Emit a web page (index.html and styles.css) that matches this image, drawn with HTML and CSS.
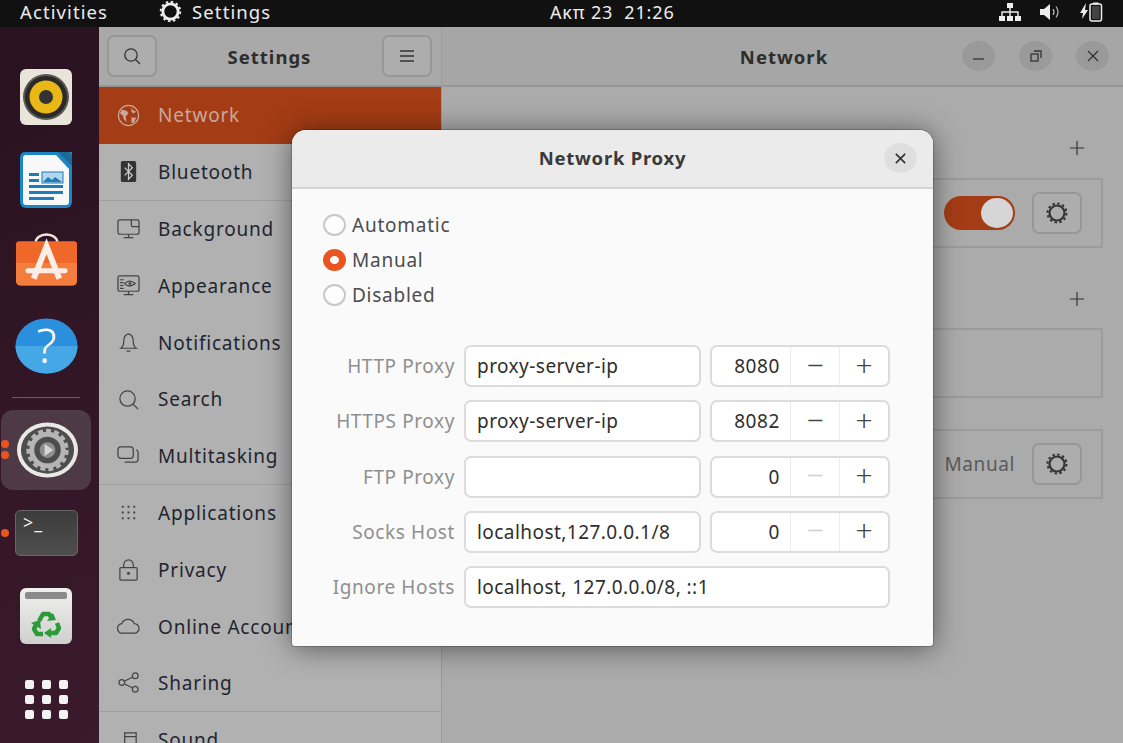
FILE: index.html
```html
<!DOCTYPE html>
<html lang="en">
<head>
<meta charset="utf-8">
<title>Network Proxy</title>
<link rel="stylesheet" href="styles.css">
</head>
<body>
<header class="topbar">
  <div class="top-left">
    <span class="activities">Activities</span>
    <span class="appmenu">
      <svg class="ic-appgear" viewBox="0 0 24 24"><circle cx="12" cy="12" r="8" fill="none" stroke="#eee" stroke-width="3"/><circle cx="12" cy="12" r="10.2" fill="none" stroke="#eee" stroke-width="2" stroke-dasharray="2.6 2.74"/></svg>
      Settings
    </span>
  </div>
  <div class="clock">Ακπ 23&nbsp;&nbsp;21:26</div>
  <div class="tray">
    <svg class="ic-net" viewBox="0 0 22 18"><path d="M8 0h6v5H8zM0 13h6v5H0zM8 13h6v5H8zM16 13h6v5h-6z" fill="#eee"/><path d="M11 5v4M3 13V9h16v4M11 9v4" stroke="#eee" stroke-width="1.4" fill="none"/></svg>
    <svg class="ic-vol" viewBox="0 0 22 18"><path d="M1 6h4l6-5v16l-6-5H1z" fill="#eee"/><path d="M14 6q2 3 0 6M17 3.500q4 5.500 0 11" stroke="#bbb" stroke-width="1.200" fill="none"/></svg>
    <svg class="ic-bat" viewBox="0 0 24 20"><path d="M7 1 1 11h3l-1 6 6-9H6z" fill="#eee"/><rect x="11" y="2" width="11.500" height="17" rx="2" fill="none" stroke="#eee" stroke-width="1.500"/><rect x="14" y="0.500" width="5.500" height="2" fill="#eee"/><rect x="13" y="4" width="7.500" height="13" fill="#ddd" opacity=".25"/></svg>
  </div>
</header>

<div class="desktop">
  <nav class="dock">
    <div class="dock-item rhythm">
      <svg viewBox="0 0 52 56"><rect width="52" height="56" rx="6" fill="#e9e5da"/><circle cx="26" cy="28" r="23" fill="#5a5855"/><circle cx="26" cy="28" r="21" fill="#2b2a28"/><circle cx="26" cy="28" r="16.500" fill="#e9b716"/><circle cx="26" cy="28" r="7" fill="#333"/></svg>
    </div>
    <div class="dock-item writer">
      <svg viewBox="0 0 52 56"><path d="M5 0h47v50a6 6 0 0 1-6 6H6a6 6 0 0 1-6-6V5a5 5 0 0 1 5-5z" fill="#1b87c6"/><path d="M38 0h9a5 5 0 0 1 5 5v9z" fill="#1a6a97"/><path d="M6 3h30l13 14v33a3 3 0 0 1-3 3H6a3 3 0 0 1-3-3V6a3 3 0 0 1 3-3z" fill="#f6f8fa"/><path d="M9 21h10v3H9zM9 27h10v3H9zM9 33h34v3H9zM9 39h34v3H9zM9 45h25v3H9z" fill="#1b7dbb"/><rect x="22" y="20" width="21" height="11" fill="#b5d5ea" stroke="#1b7dbb"/><path d="M23 30l5-5 4 3 3-3 7 5z" fill="#1b7dbb"/></svg>
    </div>
    <div class="dock-wide store">
      <svg viewBox="0 0 64 53"><path d="M21 9a11 8 0 0 1 22 0" fill="none" stroke="#f3e6da" stroke-width="2.500"/><path d="M4 8h56a3 3 0 0 1 3 3v37a5 5 0 0 1-5 5H6a5 5 0 0 1-5-5V11a3 3 0 0 1 3-3z" fill="#f0672a"/><path d="M1 30h62v18a5 5 0 0 1-5 5H6a5 5 0 0 1-5-5z" fill="#f47c3d"/><path d="M19 46 32 13l13 33" fill="none" stroke="#fbeee6" stroke-width="6"/><path d="M13 38h38" stroke="#fbeee6" stroke-width="5" stroke-linecap="round"/></svg>
    </div>
    <div class="dock-wide help">
      <svg viewBox="0 0 64 56"><ellipse cx="32" cy="28" rx="31.500" ry="28" fill="#2a8fdc"/><path d="M.500 28h63a31.500 28 0 0 1-63 0z" fill="#45a7e6"/><text x="32" y="45" text-anchor="middle" class="help-mark">?</text></svg>
    </div>
    <div class="dock-sep"></div>
    <div class="dock-active">
      <span class="dot dot-a"></span><span class="dot dot-b"></span>
      <svg viewBox="0 0 64 56"><ellipse cx="32" cy="28" rx="31" ry="28" fill="#e9e9e6"/><ellipse cx="32" cy="28" rx="27" ry="24" fill="#4d4d4d"/><circle cx="32" cy="28" r="16" fill="none" stroke="#b5b5b5" stroke-width="5"/><circle cx="32" cy="28" r="19.500" fill="none" stroke="#b5b5b5" stroke-width="4" stroke-dasharray="5 3.170"/><circle cx="32" cy="28" r="8" fill="#8e8e8e"/><path d="M29 22l9 6-9 6z" fill="#d6d6d6"/></svg>
    </div>
    <div class="dock-wide term-wrap">
      <span class="dot dot-c"></span>
      <div class="term"><span class="term-prompt">&gt;_</span></div>
    </div>
    <div class="dock-item trash">
      <svg viewBox="0 0 52 56"><defs><linearGradient id="tg" x1="0" y1="0" x2="0" y2="1"><stop offset="0" stop-color="#f1f1ef"/><stop offset="1" stop-color="#cfcfcd"/></linearGradient></defs><rect width="52" height="56" rx="6" fill="url(#tg)"/><rect x="5" y="4" width="42" height="7" rx="2" fill="#8b8b8b"/><g class="recycle"><path d="M19 33l4-7h6l2 3M37 35l2 5-3 5h-6M23 46h-6l-3-5 2-4"/><path class="recycle-tip" d="M27 33l9-1-3-7zM31 40v10l-7-5zM11 35l9-3 1 9z"/></g></svg>
    </div>
    <div class="app-grid">
      <i></i><i></i><i></i><i></i><i></i><i></i><i></i><i></i><i></i>
    </div>
  </nav>

  <main class="window">
    <aside class="sidebar">
      <div class="side-head">
        <button class="hbtn"><svg class="ic" viewBox="0 0 20 20"><circle cx="9" cy="9" r="6.200"/><path d="M13.500 13.500 18 18"/></svg></button>
        <span class="head-title">Settings</span>
        <button class="hbtn"><svg class="ic" viewBox="0 0 20 20"><path d="M3 5h14M3 10h14M3 15h14"/></svg></button>
      </div>
      <ul class="side-list">
        <li class="row selected"><svg class="ic" viewBox="0 0 24 24"><circle cx="12" cy="12" r="10.500"/><path d="M5 6l5 1 2 3-3 3 1 6-3-3-1-4-3-2zM15 3l1 3 4 2-3 2-2-2zM15 14h5l-2 5-3 1z" class="fill"/></svg>Network</li>
        <li class="row sep"><svg class="ic" viewBox="0 0 24 24"><rect x="4" y="1" width="16" height="22" rx="2" class="fill-dark"/><path d="M8 8l8 8-4 4V4l4 4-8 8" stroke="#ccc"/></svg>Bluetooth</li>
        <li class="row"><svg class="ic" viewBox="0 0 24 24"><rect x="1" y="3" width="22" height="15" rx="2"/><path d="M12 18v3M7 21.500h10M15 3v5q0 2 2 2h6" /></svg>Background</li>
        <li class="row"><svg class="ic" viewBox="0 0 24 24"><rect x="1" y="2" width="22" height="16" rx="2"/><path d="M12 18v3M7 21.500h10M3 6h4M3 9h4M3 12h4M3 15h4M8 10q5-5 11 0q-6 5-11 0z"/><circle cx="13.500" cy="10" r="1.500" class="fill"/></svg>Appearance</li>
        <li class="row"><svg class="ic" viewBox="0 0 24 24"><path d="M4 18q3-2 3-7 0-7 5-8 5 1 5 8 0 5 3 7zM10 21h4"/></svg>Notifications</li>
        <li class="row"><svg class="ic" viewBox="0 0 24 24"><circle cx="11" cy="11" r="8"/><path d="M17 17l5 5"/></svg>Search</li>
        <li class="row sep"><svg class="ic" viewBox="0 0 24 24"><rect x="1" y="3" width="16" height="12" rx="3"/><path d="M8 19h11a3 3 0 0 0 3-3V9a3 3 0 0 0-2-3"/></svg>Multitasking</li>
        <li class="row"><svg class="ic" viewBox="0 0 24 24"><path d="M5 5h2v2H5zM11 5h2v2h-2zM17 5h2v2h-2zM5 11h2v2H5zM11 11h2v2h-2zM17 11h2v2h-2zM5 17h2v2H5zM11 17h2v2h-2zM17 17h2v2h-2z" class="fill"/></svg>Applications</li>
        <li class="row"><svg class="ic" viewBox="0 0 24 24"><rect x="3" y="10" width="18" height="13" rx="1"/><path d="M7 10V7a5 5 0 0 1 10 0v3"/><circle cx="12" cy="16" r="1.600" class="fill"/></svg>Privacy</li>
        <li class="row"><svg class="ic" viewBox="0 0 24 24"><path d="M6 19a5 5 0 0 1-1-10 7 7 0 0 1 13 0 5 5 0 0 1 0 10z"/></svg>Online Accounts</li>
        <li class="row sep"><svg class="ic" viewBox="0 0 24 24"><circle cx="5" cy="12" r="3"/><circle cx="19" cy="5" r="3"/><circle cx="19" cy="19" r="3"/><path d="M8 10.500 16 6.500M8 13.500l8 4"/></svg>Sharing</li>
        <li class="row"><svg class="ic" viewBox="0 0 24 24"><path d="M8 20V4h12v16M8 8h12"/></svg>Sound</li>
      </ul>
    </aside>
    <section class="content">
      <div class="content-head">
        <span class="head-title">Network</span>
        <div class="winbtns">
          <span class="winbtn"><svg class="ic" viewBox="0 0 16 16"><path d="M2 11h11"/></svg></span>
          <span class="winbtn"><svg class="ic" viewBox="0 0 16 16"><rect x="3" y="6" width="7" height="7"/><path d="M6 3h7v7"/></svg></span>
          <span class="winbtn"><svg class="ic" viewBox="0 0 16 16"><path d="M3 3l10 10M13 3 3 13"/></svg></span>
        </div>
      </div>
      <div class="content-body">
        <div class="sec-add"><svg class="ic" viewBox="0 0 18 18"><path d="M9 1v16M1 9h16"/></svg></div>
        <div class="card">
          <span class="switch"><span class="knob"></span></span>
          <button class="gear-btn"><svg class="ic" viewBox="0 0 24 24"><circle cx="12" cy="12" r="7.500" stroke-width="2.200"/><circle cx="12" cy="12" r="9.500" stroke-width="2" stroke-dasharray="2.500 2.470"/></svg></button>
        </div>
        <div class="sec-add add2"><svg class="ic" viewBox="0 0 18 18"><path d="M9 1v16M1 9h16"/></svg></div>
        <div class="card empty"></div>
        <div class="card card3">
          <span class="card-val">Manual</span>
          <button class="gear-btn"><svg class="ic" viewBox="0 0 24 24"><circle cx="12" cy="12" r="7.500" stroke-width="2.200"/><circle cx="12" cy="12" r="9.500" stroke-width="2" stroke-dasharray="2.500 2.470"/></svg></button>
        </div>
      </div>
    </section>
  </main>

  <div class="dialog">
    <div class="dlg-head">
      <span class="dlg-title">Network Proxy</span>
      <span class="dlg-close"><svg class="ic" viewBox="0 0 16 16"><path d="M3 3l10 10M13 3 3 13"/></svg></span>
    </div>
    <div class="dlg-body">
      <div class="radios">
        <label class="radio"><span class="rdot"></span>Automatic</label>
        <label class="radio"><span class="rdot on"></span>Manual</label>
        <label class="radio"><span class="rdot"></span>Disabled</label>
      </div>
      <div class="form">
        <span class="flabel">HTTP Proxy</span>
        <span class="entry">proxy-server-ip</span>
        <span class="spin"><span class="spin-val">8080</span><span class="spin-btn">−</span><span class="spin-btn">+</span></span>
        <span class="flabel">HTTPS Proxy</span>
        <span class="entry">proxy-server-ip</span>
        <span class="spin"><span class="spin-val">8082</span><span class="spin-btn">−</span><span class="spin-btn">+</span></span>
        <span class="flabel">FTP Proxy</span>
        <span class="entry"></span>
        <span class="spin"><span class="spin-val">0</span><span class="spin-btn off">−</span><span class="spin-btn">+</span></span>
        <span class="flabel">Socks Host</span>
        <span class="entry">localhost,127.0.0.1/8</span>
        <span class="spin"><span class="spin-val">0</span><span class="spin-btn off">−</span><span class="spin-btn">+</span></span>
        <span class="flabel">Ignore Hosts</span>
        <span class="entry wide">localhost, 127.0.0.0/8, ::1</span>
      </div>
    </div>
  </div>
</div>
</body>
</html>
```
FILE: styles.css
```css
* { box-sizing: border-box; }
html, body { margin: 0; height: 100%; overflow: hidden; }
body { width: 1123px; height: 743px; font-family: "Noto Sans", "Open Sans", sans-serif; font-size: 19px; background: #2b1421; display: flex; flex-direction: column; }

.topbar { height: 27px; flex: none; background: #111; color: #ececec; display: grid; grid-template-columns: 530px auto 1fr; align-items: center; font-size: 18.500px; letter-spacing: 1.100px; padding: 0 0 5px 20px; line-height: 22px; }
.top-left { display: flex; align-items: center; gap: 51px; }
.appmenu { display: flex; align-items: center; gap: 10px; }
.ic-appgear { width: 23px; height: 23px; }
.clock { font-size: 18px; letter-spacing: .85px; }
.tray { display: flex; justify-content: flex-end; align-items: center; gap: 18px; padding-right: 20px; }
.ic-net { width: 22px; height: 18px; }
.ic-vol { width: 22px; height: 18px; }
.ic-bat { width: 24px; height: 20px; }

.desktop { flex: 1; display: flex; position: relative; min-height: 0; }

.dock { width: 99px; flex: none; background: linear-gradient(160deg, #2a1220, #3a1a2c); display: flex; flex-direction: column; align-items: flex-start; padding-top: 42px; }
.dock svg { display: block; width: 100%; height: 100%; }
.dock-item { width: 52px; height: 56px; flex: none; margin-left: 20px; }
.dock-wide { width: 63px; flex: none; margin-left: 15px; position: relative; }
.writer { margin-top: 27px; }
.store { height: 53px; margin-top: 25px; }
.help { height: 56px; margin-top: 32px; }
.dock-sep { width: 68px; height: 1px; background: #6c5a66; margin: 23px 0 0 12px; flex: none; }
.dock-active { width: 90px; height: 80px; margin: 12px 0 0 1px; border-radius: 12px; background: #4e3a47; display: flex; align-items: center; justify-content: center; position: relative; flex: none; }
.dock .dock-active svg { width: 63px; height: 56px; margin-left: 2px; }
.dot { position: absolute; width: 8px; height: 8px; border-radius: 50%; background: #e95420; }
.dot-a { left: 0; top: 30px; }
.dot-b { left: 0; top: 41px; }
.dot-c { left: -14px; top: 19px; }
.term-wrap { height: 46px; margin-top: 20px; }
.term { width: 63px; height: 46px; border-radius: 5px; background: linear-gradient(#3c3c3c, #4e4e4e); border: 1px solid #666; color: #eee; padding: 0 0 0 7px; }
.term-prompt { font-size: 18px; letter-spacing: 1px; line-height: 22px; display: block; }
.trash { margin-top: 32px; }
.recycle path { fill: none; stroke: #2c9a36; stroke-width: 4.500; stroke-linejoin: round; }
.recycle .recycle-tip { fill: #2c9a36; stroke: none; }
.app-grid { display: grid; grid-template-columns: repeat(3, 9px); gap: 6px 8px; margin: 36px 0 0 25px; }
.app-grid i { width: 9px; height: 9px; background: #f2f2f2; border-radius: 2px; }

.window { flex: 1; display: flex; min-width: 0; }
.ic { fill: none; stroke: currentColor; stroke-width: 1.300; display: block; }
.ic .fill { fill: currentColor; stroke: none; }
.ic .fill-dark { fill: #333; stroke: none; }

.sidebar { width: 343px; flex: none; background: #b1b1b1; border-right: 1px solid #9a9a9a; color: #1f2530; display: flex; flex-direction: column; overflow: hidden; }
.side-head { height: 60px; flex: none; padding: 9px 9px 9px 8px; background: #a9a9a9; border-bottom: 2px solid #959595; display: flex; align-items: center; justify-content: space-between; }
.hbtn { width: 50px; height: 42px; border: 2px solid #979797; border-radius: 7px; background: #adadad; color: #333; display: flex; align-items: center; justify-content: center; padding: 0; }
.hbtn .ic { width: 20px; height: 20px; }
.head-title { font-weight: 700; font-size: 18.500px; letter-spacing: 1px; color: #2d2d2d; }

.side-list { list-style: none; margin: 0; padding: 0; }
.row { height: 56.800px; display: flex; align-items: center; gap: 18px; padding-left: 18px; white-space: nowrap; font-size: 19px; letter-spacing: .8px; }
.row .ic { width: 23px; height: 23px; flex: none; color: #444; }
.row.sep { border-bottom: 1px solid #a0a0a0; }
.row.selected { background: #a43c15; color: #c9a79a; }
.row.selected .ic { color: #c9a79a; }

.content { flex: 1; background: #ababab; min-width: 0; display: flex; flex-direction: column; }
.content-head { height: 60px; flex: none; background: #a6a6a6; border-bottom: 2px solid #959595; display: flex; align-items: center; justify-content: center; position: relative; padding-left: 3px; }
.winbtns { position: absolute; right: 14px; top: 14px; display: flex; gap: 24px; }
.winbtn { width: 33px; height: 30px; border-radius: 50%; background: #9a9a9a; color: #333; display: flex; align-items: center; justify-content: center; }
.winbtn .ic { width: 16px; height: 16px; }

.content-body { flex: 1; padding: 0 20px 0 0; display: flex; flex-direction: column; align-items: flex-end; }
.sec-add { height: 91px; padding: 53px 18px 0 0; color: #333; }
.sec-add .ic { width: 16px; height: 16px; }
.add2 { height: 80px; padding-top: 43px; }
.card { width: 400px; height: 70px; border: 2px solid #9c9c9c; display: flex; align-items: center; justify-content: flex-end; gap: 17px; padding-right: 19px; flex: none; }
.empty { margin-bottom: 31px; }
.switch { width: 71px; height: 34px; border-radius: 17px; background: #a43c15; padding: 2px; display: flex; justify-content: flex-end; }
.knob { width: 32px; height: 30px; border-radius: 50%; background: #d6d6d6; }
.gear-btn { width: 50px; height: 42px; border: 2px solid #979797; border-radius: 7px; background: #adadad; color: #333; padding: 0; display: flex; align-items: center; justify-content: center; }
.gear-btn .ic { width: 24px; height: 24px; }
.card-val { color: #5a5a5a; font-size: 19px; letter-spacing: .6px; }

.dialog { position: absolute; left: 292px; top: 103px; width: 641px; height: 516px; background: #fafafa; border-radius: 14px 14px 3px 3px; box-shadow: 0 2px 28px rgba(0, 0, 0, .5), 0 0 0 1px rgba(0, 0, 0, .18); overflow: hidden; display: flex; flex-direction: column; }
.dlg-head { height: 59px; flex: none; background: #ebebeb; border-bottom: 2px solid #d4d4d4; display: flex; align-items: center; justify-content: center; position: relative; padding-bottom: 2px; }
.dlg-title { font-weight: 700; font-size: 18.500px; letter-spacing: .75px; color: #3a3a3a; }
.dlg-close { position: absolute; right: 16px; top: 13px; width: 33px; height: 30px; border-radius: 50%; background: #dfdfdf; color: #333; display: flex; align-items: center; justify-content: center; }
.dlg-close .ic { width: 15px; height: 15px; stroke-width: 1.800; }

.dlg-body { flex: 1; padding: 18px 43px 0 31px; }
.radios { display: flex; flex-direction: column; margin-bottom: 33px; }
.radio { height: 35px; display: flex; align-items: center; gap: 6px; color: #4c4c4c; font-size: 19px; letter-spacing: .75px; }
.rdot { width: 23px; height: 22px; border-radius: 50%; background: #fdfdfd; border: 2px solid #c8c8c8; flex: none; }
.rdot.on { border: 7px solid #e95420; background: #fff; }

.form { display: grid; grid-template-columns: 132px 237px 180px; column-gap: 9px; row-gap: 13.250px; grid-auto-rows: 42px; align-items: stretch; }
.flabel { display: flex; align-items: center; justify-content: flex-end; color: #8f8f8f; font-size: 19px; letter-spacing: .6px; white-space: nowrap; }
.entry { background: #fff; border: 2px solid #dcdcdc; border-radius: 7px; display: flex; align-items: center; padding-left: 11px; color: #2e2e2e; font-size: 19px; letter-spacing: .45px; white-space: nowrap; }
.entry.wide { grid-column: 2 / 4; }
.spin { background: #fff; border: 2px solid #dcdcdc; border-radius: 7px; display: grid; grid-template-columns: 78px 49px 1fr; color: #2e2e2e; }
.spin-val { display: flex; align-items: center; justify-content: flex-end; padding-right: 10px; font-size: 19px; letter-spacing: .6px; }
.spin-btn { display: flex; align-items: center; justify-content: center; border-left: 1px solid #ececec; font-size: 30px; font-weight: 300; color: #444; line-height: 1; padding-bottom: 3px; }
.spin-btn.off { color: #d0d0d0; }
.help-mark { font-size: 48px; fill: #fff; font-family: "Noto Sans", sans-serif; font-weight: 300; }
```
